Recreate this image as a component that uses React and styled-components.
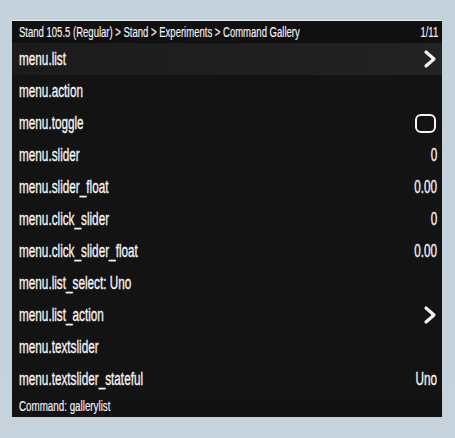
import React from "react";
import styled, { createGlobalStyle } from "styled-components";

const GlobalStyle = createGlobalStyle`
  html, body {
    margin: 0;
    padding: 0;
    background: #c4d2dc;
  }
  body {
    font-family: "Liberation Sans", Arial, sans-serif;
    color: #f4f4f4;
  }
`;

const Page = styled.div`
  width: 455px;
  height: 438px;
  padding: 20px 0 0 12px;
  box-sizing: border-box;
  background: linear-gradient(180deg, #c3d1db 0%, #c6d3dc 100%);
`;

const Panel = styled.div`
  width: 430px;
  display: flex;
  flex-direction: column;
  background: #131313;
  border-top: 1px solid #e6edf1;
`;

const Header = styled.div`
  height: 22px;
  display: flex;
  align-items: center;
  padding: 0 4px 0 7px;
  background: #101010;
  font-size: 14px;
`;

const Row = styled.div`
  height: 32px;
  display: flex;
  align-items: center;
  padding: 0 5px 0 7px;
  background: ${(p) =>
    p.$active ? "linear-gradient(90deg, #1b1b1b 0%, #202020 70%, #232323 100%)" : "transparent"};
  font-size: 18.5px;
`;

const Footer = styled.div`
  height: 22px;
  display: flex;
  align-items: center;
  padding: 0 7px;
  font-size: 14px;
  background: #121212;
`;

/* the left cell takes the free room so the unscaled text width doesn't push the right cell */
const Left = styled.div`
  flex: 1;
  min-width: 0;
`;

const Right = styled.div`
  display: flex;
  align-items: center;
  justify-content: flex-end;
`;

const Text = styled.span`
  display: inline-block;
  white-space: nowrap;
  -webkit-text-stroke: ${(p) => p.$stroke ?? 0.35}px #f4f4f4;
  transform: scaleX(${(p) => p.$scale || 0.635});
  transform-origin: ${(p) => (p.$right ? "right" : "left")} center;
`;

const Toggle = styled.span`
  width: 17px;
  height: 15px;
  border: 2.5px solid #f4f4f4;
  border-radius: 6px;
  margin-right: 1px;
`;

const Chevron = () => (
  <svg width="14" height="20" viewBox="0 0 14 20">
    <path d="M3 3 L11 10 L3 17" fill="none" stroke="#f4f4f4" strokeWidth="3.2" strokeLinecap="round" strokeLinejoin="round" />
  </svg>
);

const items = [
  { label: "menu.list", right: "chevron", active: true },
  { label: "menu.action" },
  { label: "menu.toggle", right: "toggle" },
  { label: "menu.slider", right: "0" },
  { label: "menu.slider_float", right: "0.00" },
  { label: "menu.click_slider", right: "0" },
  { label: "menu.click_slider_float", right: "0.00" },
  { label: "menu.list_select: Uno" },
  { label: "menu.list_action", right: "chevron" },
  { label: "menu.textslider" },
  { label: "menu.textslider_stateful", right: "Uno" },
];

const renderRight = (right) => {
  if (!right) return null;
  if (right === "chevron") return <Chevron />;
  if (right === "toggle") return <Toggle />;
  return <Text $right>{right}</Text>;
};

export default function App() {
  return (
    <Page>
      <GlobalStyle />
      <Panel>
        <Header>
          <Left>
            <Text $scale={0.68} $stroke={0.15}>Stand 105.5 (Regular) &gt; Stand &gt; Experiments &gt; Command Gallery</Text>
          </Left>
          <Right>
            <Text $right $scale={0.68} $stroke={0.15}>1/11</Text>
          </Right>
        </Header>
        {items.map((item) => (
          <Row key={item.label} $active={item.active}>
            <Left>
              <Text>{item.label}</Text>
            </Left>
            <Right>{renderRight(item.right)}</Right>
          </Row>
        ))}
        <Footer>
          <Text $scale={0.7} $stroke={0.15}>Command: gallerylist</Text>
        </Footer>
      </Panel>
    </Page>
  );
}
